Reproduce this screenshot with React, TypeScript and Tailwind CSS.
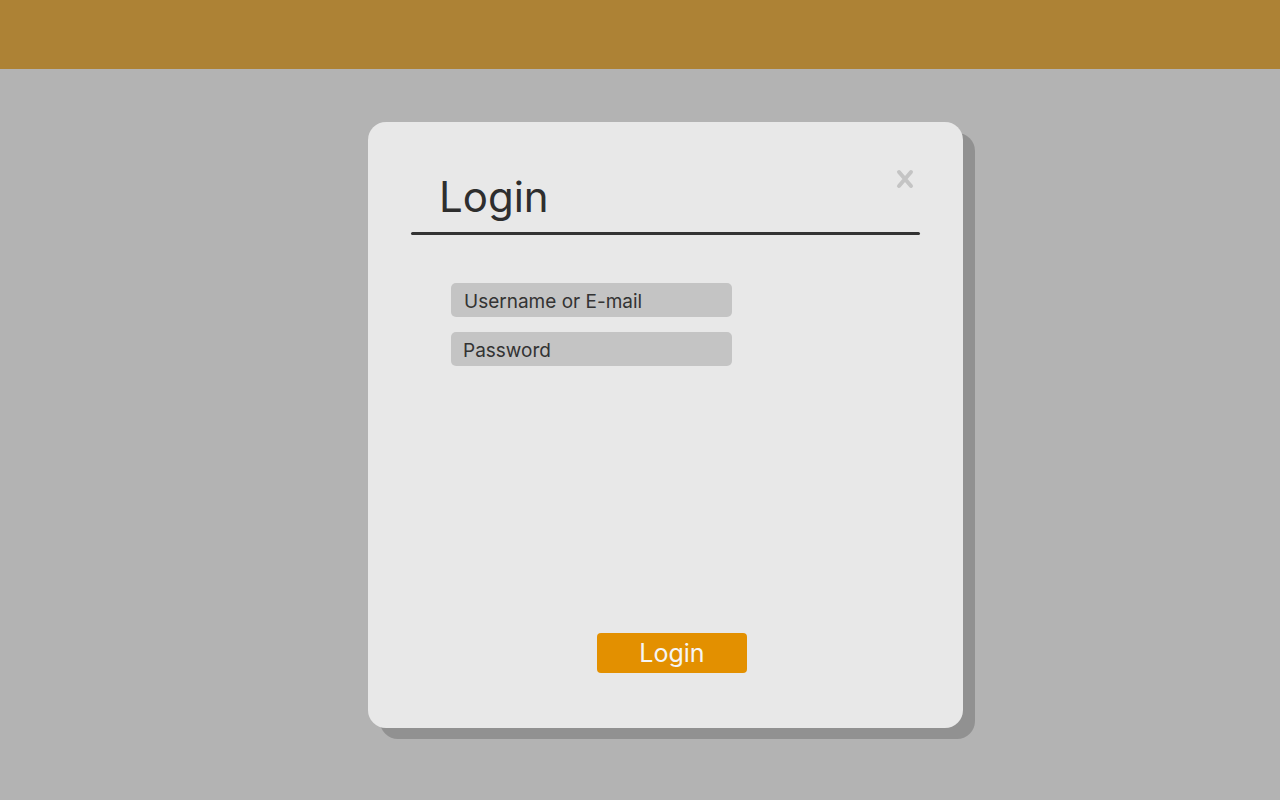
export default function App() {
  return (
    <div
      className="min-h-[800px] w-full bg-[#b3b3b3] flex flex-col"
      style={{ fontFamily: "Inter, 'Noto Sans', sans-serif" }}
    >
      <div className="h-[69px] bg-[#ad8235]" />
      <div className="flex pt-[53px] pl-[368px]">
        <div className="relative w-[595px] h-[606px] rounded-[18px] bg-[#e8e8e8] shadow-[12px_11px_0_#919191] flex flex-col">
          <div className="flex items-start justify-between pl-[71px] pr-[49px] pt-[50px]">
            <h1 className="text-[42px] leading-[50px] text-[#2e2e2e]">Login</h1>
            <button className="mt-[-3px]">
              <svg width="18" height="20" viewBox="0 0 18 20">
                <path d="M3 3 L15 17 M15 3 L3 17" stroke="#c4c4c4" strokeWidth="4" strokeLinecap="round" />
              </svg>
            </button>
          </div>
          <div className="mx-[43px] mt-[10px] h-[3px] rounded-full bg-[#333333]" />
          <div className="flex flex-col gap-[15px] pl-[83px] pt-[48px]">
            <div className="w-[281px] h-[34px] rounded-[5px] bg-[#c4c4c4] flex items-center pl-[13px] pt-[4px] text-[19px] text-[#333333]">
              Username or E-mail
            </div>
            <div className="w-[281px] h-[34px] rounded-[5px] bg-[#c4c4c4] flex items-center pl-[12px] pt-[4px] text-[19px] text-[#333333]">
              Password
            </div>
          </div>
          <div className="flex-1" />
          <div className="flex justify-center pb-[55px] pl-[13px]">
            <button className="w-[150px] h-[40px] rounded-[4px] bg-[#e39000] text-[25px] text-[#f5f5f5] leading-none">
              Login
            </button>
          </div>
        </div>
      </div>
    </div>
  )
}
